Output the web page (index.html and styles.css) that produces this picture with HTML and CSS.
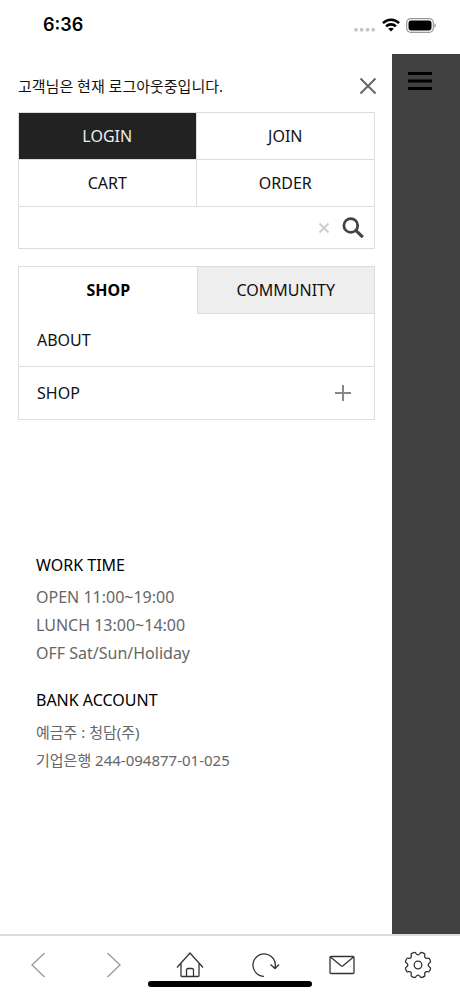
FILE: index.html
```html
<!DOCTYPE html>
<html lang="ko">
<head>
<meta charset="utf-8">
<meta name="viewport" content="width=device-width, initial-scale=1">
<title>Shop menu</title>
<link rel="stylesheet" href="styles.css">
</head>
<body>
<div class="screen">
  <header class="status">
    <time class="clock">6:36</time>
    <div class="indicators">
      <svg width="22" height="4" viewBox="0 0 22 4" fill="#c6c6c6" aria-hidden="true"><rect width="3.4" height="3.4" x="0.3" rx="1"/><rect width="3.4" height="3.4" x="6" rx="1"/><rect width="3.4" height="3.4" x="11.8" rx="1"/><rect width="3.4" height="3.4" x="17.5" rx="1"/></svg>
      <svg width="18" height="14" viewBox="0 0 18 14" aria-hidden="true"><g fill="none" stroke="#000" stroke-width="2.6"><path d="M.9 5.2C5.4 .6 12.6 .6 17.1 5.2"/><path d="M4.1 8.4C6.8 5.7 11.2 5.7 13.9 8.4"/></g><path d="M6.2 10.7C7.8 9.3 10.2 9.3 11.8 10.7L9 13.5Z"/></svg>
      <svg width="30" height="15" viewBox="0 0 30 15" aria-hidden="true"><rect x=".7" y=".7" width="26.6" height="13.6" rx="4" fill="none" stroke="#999" stroke-width="1.2"/><rect x="2.5" y="2.5" width="23" height="10" rx="2.4"/><path d="M28.5 5.2C30 6 30 9 28.5 9.8Z" fill="#777"/></svg>
    </div>
  </header>
  <div class="stage">
    <main class="drawer">
      <div class="greeting">
        <p>고객님은 현재 로그아웃중입니다.</p>
        <button class="close" type="button" aria-label="닫기"><svg width="18" height="18" viewBox="0 0 18 18" fill="none" stroke="#666" stroke-width="2"><path d="M1.5 1.5 16.5 16.5M16.5 1.5 1.5 16.5"/></svg></button>
      </div>
      <div class="account">
        <nav class="links">
          <a class="dark" href="#login">LOGIN</a>
          <a href="#join">JOIN</a>
          <a href="#cart">CART</a>
          <a href="#order">ORDER</a>
        </nav>
        <form class="search">
          <input type="text" aria-label="검색">
          <button type="reset" aria-label="지우기"><svg width="12" height="12" viewBox="0 0 12 12" fill="none" stroke="#ccc" stroke-width="1.8"><path d="M1.5 1.5 10.5 10.5M10.5 1.5 1.5 10.5"/></svg></button>
          <button type="button" aria-label="검색하기"><svg width="22" height="22" viewBox="0 0 22 22" fill="none" stroke="#444" stroke-width="2.8"><circle cx="8.8" cy="8.5" r="6.9"/><path d="M13.5 13.2 20.8 20.2" stroke-width="3.2"/></svg></button>
        </form>
      </div>
      <div class="menu">
        <div class="tabs">
          <button class="tab active" type="button">SHOP</button>
          <button class="tab" type="button">COMMUNITY</button>
        </div>
        <ul>
          <li><a href="#about">ABOUT</a></li>
          <li><a href="#shop">SHOP <svg width="16" height="16" viewBox="0 0 16 16" fill="none" stroke="#888" stroke-width="2"><path d="M8 0V16M0 8H16"/></svg></a></li>
        </ul>
      </div>
      <div class="info">
        <section>
          <h2>WORK TIME</h2>
          <p>OPEN 11:00~19:00<br>LUNCH 13:00~14:00<br>OFF Sat/Sun/Holiday</p>
        </section>
        <section>
          <h2>BANK ACCOUNT</h2>
          <p class="bank">예금주 : 청담(주)<br>기업은행 244-094877-01-025</p>
        </section>
      </div>
    </main>
    <aside class="shade">
      <button type="button" aria-label="메뉴"><svg width="24" height="20" viewBox="0 0 24 20" fill="none" stroke="#000" stroke-width="3"><path d="M0 2.5H24M0 10H24M0 17.5H24"/></svg></button>
    </aside>
  </div>
  <nav class="toolbar">
    <button type="button" aria-label="뒤로"><svg width="28" height="28" viewBox="-14 -14 28 28" stroke="#999"><path d="M6.5-12-6 0 6.5 12"/></svg></button>
    <button type="button" aria-label="앞으로"><svg width="28" height="28" viewBox="-14 -14 28 28" stroke="#999"><path d="M-6.5-12 6 0-6.5 12"/></svg></button>
    <button type="button" aria-label="홈"><svg width="28" height="28" viewBox="-14 -14 28 28"><path d="M-13 2.5 0-12 13 2.5M-9-1.5V10.5Q-9 11.5-8 11.5H8Q9 11.5 9 10.5V-1.5M-3.5 11.5V5Q-3.5 3.5-2 3.5H2Q3.500 3.5 3.500 5V11.5"/></svg></button>
    <button type="button" aria-label="새로고침"><svg width="28" height="28" viewBox="-14 -14 28 28"><path d="M-2 11.3A11.2 11.2 0 1 1 9 2.8M4.5-.5 9 3.5 13-.5"/></svg></button>
    <button type="button" aria-label="메일"><svg width="28" height="28" viewBox="-14 -14 28 28"><rect x="-12" y="-8.5" width="24" height="17" rx="1"/><path d="M-11.5-8-1 .8Q0 1.6 1 .8L11.5-8"/></svg></button>
    <button type="button" aria-label="설정"><svg width="28" height="28" viewBox="-14 -14 28 28"><defs><path id="cog" d="M-3.1-12.6C-1.7-12.2-2.1-10.2 0-10.2S1.7-12.2 3.1-12.6Q5-12.3 6.72-11.1"/></defs><use href="#cog"/><use href="#cog" transform="rotate(45)"/><use href="#cog" transform="rotate(90)"/><use href="#cog" transform="rotate(135)"/><use href="#cog" transform="rotate(180)"/><use href="#cog" transform="rotate(225)"/><use href="#cog" transform="rotate(270)"/><use href="#cog" transform="rotate(315)"/><circle r="3.8"/></svg></button>
    <span class="home-bar"></span>
  </nav>
</div>
</body>
</html>
```
FILE: styles.css
```css
* { box-sizing: border-box; }
body, h2, p, ul { margin: 0; padding: 0; }
body {
  background: #fff;
  color: #111;
  font: 16px/24px "Noto Sans", "Noto Sans CJK KR", sans-serif;
}
svg { display: block; flex: none; }
a { color: inherit; text-decoration: none; }
ul { list-style: none; }
button {
  display: flex;
  align-items: center;
  justify-content: center;
  padding: 0;
  border: 0;
  background: none;
  color: inherit;
  font: inherit;
}
.screen { display: flex; flex-direction: column; min-height: 100vh; }

.status {
  display: flex;
  justify-content: space-between;
  align-items: center;
  height: 54px;
  padding: 0 24px 4px 43px;
}
.clock { font: 600 18px/24px Inter, sans-serif; color: #000; }
.indicators { display: flex; align-items: center; gap: 6px; }
.indicators svg:first-child { margin-top: 10px; }

.stage { display: flex; flex: 1; }
.drawer { flex: 1; padding: 16px 17px 24px 18px; }
.shade { width: 68px; padding: 17px 16px; background: #404140; }

.greeting {
  display: flex;
  justify-content: space-between;
  align-items: center;
  height: 32px;
  margin-bottom: 10px;
  font-size: 15px;
}
.close { width: 18px; height: 32px; margin-right: -2px; }

.account, .menu { border: 1px solid #ddd; }
.links { display: grid; grid-template-columns: 1fr 1fr; }
.links a {
  height: 47px;
  line-height: 46px;
  border-bottom: 1px solid #ddd;
  text-align: center;
}
.links a:nth-child(odd) { border-right: 1px solid #ddd; }
.links .dark { background: #222; color: #eee; }
.search {
  display: flex;
  align-items: center;
  gap: 12px;
  height: 41px;
  padding: 0 10px;
}
.search input {
  flex: 1;
  min-width: 0;
  height: 40px;
  border: 0;
  outline: 0;
  background: none;
  font: inherit;
}

.menu { margin-top: 17px; }
.tabs { display: grid; grid-template-columns: 1fr 1fr; }
.tab {
  height: 47px;
  border: solid #ddd;
  border-width: 0 0 1px 1px;
  background: #eee;
}
.tab.active { border-color: transparent; background: none; color: #000; font-weight: 700; }
.menu li + li { border-top: 1px solid #ddd; }
.menu li a {
  display: flex;
  align-items: center;
  justify-content: space-between;
  height: 52px;
  padding: 0 23px 0 18px;
}

.info { margin-top: 131px; padding-left: 18px; line-height: 28px; }
.info section + section { margin-top: 19px; }
.info h2 { margin-bottom: 4px; color: #000; font-size: 16px; font-weight: 400; }
.info p { color: #666; }
.info .bank { font-size: 15px; }

.toolbar {
  position: relative;
  display: grid;
  grid-template-columns: repeat(6, 1fr);
  height: 62px;
  padding-right: 4px;
  border-top: 2px solid #ddd;
}
.toolbar button { height: 58px; }
.toolbar svg { fill: none; stroke-width: 1.3px; }
.toolbar svg:not([stroke]) { stroke: #333; }
.home-bar {
  position: absolute;
  bottom: 9px;
  left: 50%;
  width: 164px;
  height: 6px;
  margin-left: -82px;
  border-radius: 3px;
  background: #000;
}
```
